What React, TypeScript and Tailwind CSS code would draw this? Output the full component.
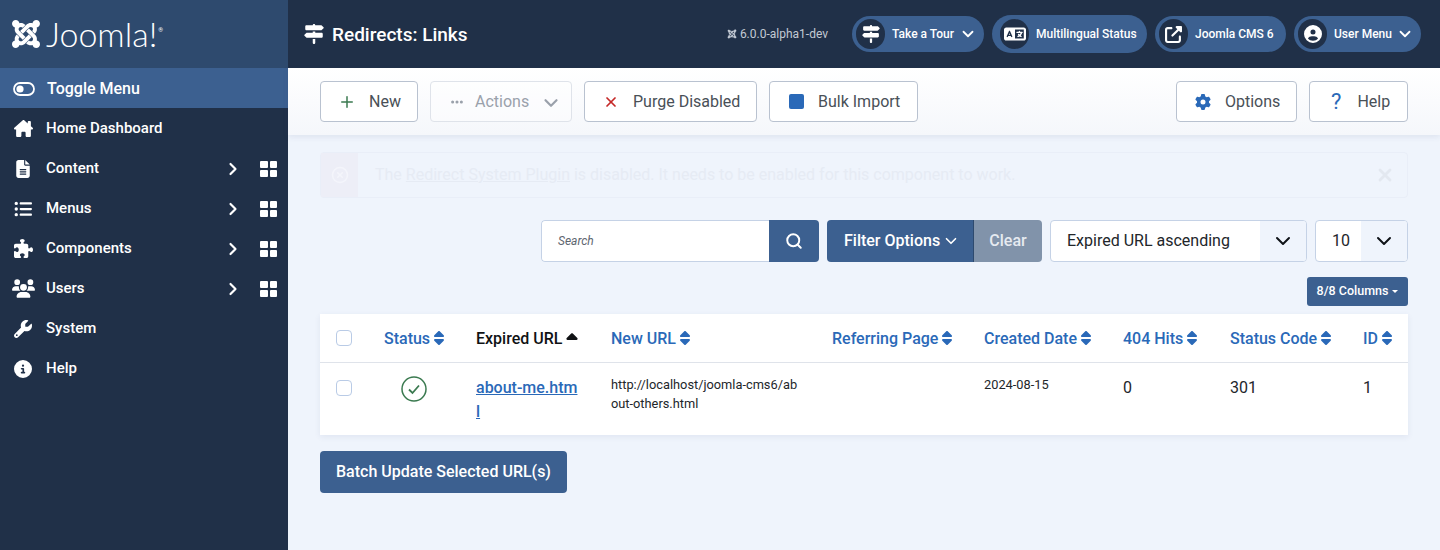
import React from 'react';
import { ChevronDown, ChevronRight, Plus, X, Search, CircleX } from 'lucide-react';
import { FaHouseChimney, FaFileLines, FaListUl, FaPuzzlePiece, FaUsers, FaWrench, FaCircleInfo, FaJoomla, FaSignsPost, FaLanguage, FaUpRightFromSquare, FaCircleUser, FaGear, FaSort, FaSortUp, FaEllipsis } from 'react-icons/fa6';

function ToggleIcon() {
  return (
    <svg width="22" height="14" viewBox="0 0 22 14" fill="none" className="shrink-0">
      <rect x="1" y="1" width="20" height="12" rx="6" stroke="#fff" strokeWidth="1.8" />
      <circle cx="7" cy="7" r="3.6" fill="#fff" />
    </svg>
  );
}

function QuadIcon() {
  return (
    <div className="grid grid-cols-2 gap-[2px] w-[17px] h-[16px]">
      <span className="bg-white rounded-[1px]" />
      <span className="bg-white rounded-[1px]" />
      <span className="bg-white rounded-[1px]" />
      <span className="bg-white rounded-[1px]" />
    </div>
  );
}

const menu = [
  { label: 'Home Dashboard', icon: <FaHouseChimney size={19} /> },
  { label: 'Content', icon: <FaFileLines size={18} />, sub: true },
  { label: 'Menus', icon: <FaListUl size={18} />, sub: true },
  { label: 'Components', icon: <FaPuzzlePiece size={19} />, sub: true },
  { label: 'Users', icon: <FaUsers size={23} />, sub: true },
  { label: 'System', icon: <FaWrench size={18} /> },
  { label: 'Help', icon: <FaCircleInfo size={18} /> },
];

function Sidebar() {
  return (
    <aside className="w-[288px] shrink-0 bg-[#203048] text-white">
      <div className="h-[68px] bg-[#2e4a6e] flex items-center pl-[10px] gap-[4px]">
        <FaJoomla size={32} />
        <span className="text-[34px] font-['Lato'] font-light leading-none">Joomla!</span>
        <span className="text-[6px] self-start mt-[25px] -ml-[3px]">®</span>
      </div>
      <div className="h-10 pt-[1px] bg-[#3c6090] flex items-center pl-[13px] gap-[12px] text-[16px] font-medium">
        <ToggleIcon />
        <span>Toggle Menu</span>
      </div>
      {menu.map((m) => (
        <div key={m.label} className="h-10 pt-[1px] flex items-center text-[15px] font-medium">
          <span className="w-[46px] flex justify-center pl-[1px] pr-[1px] shrink-0">{m.icon}</span>
          <span className="flex-1">{m.label}</span>
          {m.sub && (
            <div className="flex items-center gap-[17px] pr-[11px]">
              <ChevronRight size={20} strokeWidth={2.6} />
              <QuadIcon />
            </div>
          )}
        </div>
      ))}
    </aside>
  );
}

function Pill({ icon, label, chevron, className }: { icon: React.ReactNode; label: string; chevron?: boolean; className: string }) {
  return (
    <div className={`${className} rounded-full bg-[#3c6090] flex items-center text-white text-[12px] font-medium`}>
      <span className="w-[29px] h-[30px] rounded-full bg-[#203048] flex items-center justify-center shrink-0">{icon}</span>
      <span className="ml-[7px] whitespace-nowrap">{label}</span>
      {chevron && <ChevronDown size={18} strokeWidth={2.4} className="ml-auto mr-[7px]" />}
    </div>
  );
}

function Header() {
  return (
    <header className="h-[68px] bg-[#203048] flex items-center text-white">
      <div className="pl-[16px] flex items-center gap-[8px] flex-1">
        <FaSignsPost size={20} />
        <h1 className="text-[19px] font-medium pt-[2px]">Redirects: Links</h1>
      </div>
      <div className="flex items-center gap-[3px] text-[12px] text-[#c3cad4] mr-[24px]">
        <FaJoomla size={10} />
        <span>6.0.0-alpha1-dev</span>
      </div>
      <div className="flex items-center gap-[8px] pr-[19px]">
        <Pill className="w-[132px] h-[36px] pl-[4px]" icon={<FaSignsPost size={18} />} label="Take a Tour" chevron />
        <Pill className="w-[155px] h-[38px] pl-[8px]" icon={<FaLanguage size={22} />} label="Multilingual Status" />
        <Pill className="w-[131px] h-[36px] pl-[4px]" icon={<FaUpRightFromSquare size={17} />} label="Joomla CMS 6" />
        <Pill className="w-[127px] h-[36px] pl-[4px]" icon={<FaCircleUser size={18} />} label="User Menu" chevron />
      </div>
    </header>
  );
}

function ToolButton({ icon, label, className, disabled }: { icon: React.ReactNode; label: string; className: string; disabled?: boolean }) {
  return (
    <button className={`${className} h-[41px] rounded-[4px] border bg-white flex items-center text-[16px] ${disabled ? 'border-[#dfe3ea] bg-white/40 text-[#9aa1ab]' : 'border-[#b9c2d0] text-[#495057]'}`}>
      {icon}
      <span>{label}</span>
    </button>
  );
}

function Toolbar() {
  return (
    <div className="h-[67px] bg-gradient-to-b from-white to-[#f5f7fb] shadow-[0_2px_6px_rgba(50,70,110,0.09)] flex items-center pl-[32px] pr-[32px] relative">
      <div className="flex gap-[12px] flex-1">
        <ToolButton className="w-[98px] pl-[17px] gap-[13px]" label="New" icon={<Plus size={18} strokeWidth={2} className="text-[#3b7a50]" />} />
        <ToolButton disabled className="w-[142px] pl-[19px]" label="Actions" icon={<FaEllipsis size={14} className="mr-[11px] text-[#9aa1ab]" />} />
        <ToolButton className="w-[173px] pl-[18px] gap-[14px]" label="Purge Disabled" icon={<X size={16} strokeWidth={2.6} className="text-[#c52827]" />} />
        <ToolButton className="w-[149px] pl-[19px] gap-[14px]" label="Bulk Import" icon={<span className="w-[15px] h-[15px] rounded-[2px] bg-[#2a69b8]" />} />
      </div>
      <div className="flex gap-[12px]">
        <ToolButton className="w-[121px] pl-[18px] gap-[14px]" label="Options" icon={<FaGear size={16} className="text-[#2a69b8]" />} />
        <ToolButton className="w-[99px] pl-[21px] gap-[16px]" label="Help" icon={<span className="text-[22px] leading-none text-[#2a69b8]">?</span>} />
      </div>
      <ChevronDown size={22} strokeWidth={2.4} className="absolute left-[252px] top-[24px] text-[#9aa1ab]" />
    </div>
  );
}

function Alert() {
  return (
    <div className="h-[46px] flex items-stretch rounded-[4px] border border-[#e9eef8] text-[16px] text-[#e6ebf4]">
      <div className="w-[37px] bg-[#edeef7] flex items-center justify-center">
        <CircleX size={18} className="text-[#f4f5fb]" />
      </div>
      <div className="flex-1 flex items-center pl-[17px]">
        <span>
          The <span className="underline">Redirect System Plugin</span> is disabled. It needs to be enabled for this component to work.
        </span>
      </div>
      <X size={20} strokeWidth={3.4} className="self-center mr-[12px] text-[#e3e8f0]" />
    </div>
  );
}

function SelectBox({ label, className }: { label: string; className: string }) {
  return (
    <div className={`${className} h-[42px] rounded-[4px] border border-[#c5d2e6] bg-white flex overflow-hidden`}>
      <span className="flex-1 flex items-center pl-[16px] text-[16px] text-[#22262a]">{label}</span>
      <span className="w-[46px] bg-[#eff4fc] flex items-center justify-center">
        <ChevronDown size={24} strokeWidth={2} className="text-[#101318]" />
      </span>
    </div>
  );
}

function Filters() {
  return (
    <div className="flex justify-end gap-[8px]">
      <div className="w-[278px] h-[42px] flex rounded-[4px] overflow-hidden">
        <div className="flex-1 border border-r-0 border-[#c5d2e6] bg-white rounded-l-[4px] flex items-center pl-[16px] text-[12px] italic text-[#5e6670]">Search</div>
        <div className="w-[50px] bg-[#3c6090] flex items-center justify-center">
          <Search size={18} strokeWidth={2.6} className="text-white" />
        </div>
      </div>
      <div className="flex h-[42px] rounded-[4px] overflow-hidden text-[16px] font-medium">
        <div className="w-[147px] pl-[17px] bg-[#3c6090] text-white flex items-center gap-[2px] border-r border-[#2e4a6e]">
          Filter Options <ChevronDown size={18} strokeWidth={2.2} />
        </div>
        <div className="w-[68px] bg-[#8193aa] text-[#e6eaf0] flex items-center justify-center">Clear</div>
      </div>
      <SelectBox label="Expired URL ascending" className="w-[257px]" />
      <SelectBox label="10" className="w-[93px]" />
    </div>
  );
}

const columns = [
  { label: 'Status', w: 'w-[92px]' },
  { label: 'Expired URL', w: 'w-[135px]', active: true },
  { label: 'New URL', w: 'w-[221px]' },
  { label: 'Referring Page', w: 'w-[152px]' },
  { label: 'Created Date', w: 'w-[139px]' },
  { label: '404 Hits', w: 'w-[107px]' },
  { label: 'Status Code', w: 'w-[133px]' },
  { label: 'ID', w: 'w-[61px]' },
];

function Check() {
  return <span className="block w-[16px] h-[16px] rounded-[4px] border border-[#b9cbe6] bg-white" />;
}

function LinksTable() {
  return (
    <table className="table-fixed w-full bg-white shadow-[0_2px_6px_rgba(50,70,110,0.08)] text-[16px]">
      <thead>
        <tr className="h-[48px] border-b border-[#dfe3ea]">
          <th className="w-[48px] pl-[16px]"><Check /></th>
          {columns.map((c) => (
            <th key={c.label} className={`${c.w} pl-[16px] pt-[2px] text-left font-medium whitespace-nowrap ${c.active ? 'text-[#101214]' : 'text-[#2a69b8]'}`}>
              {c.label}
              {c.active
                ? <FaSortUp size={18} className="inline ml-[1px] align-[-6px]" />
                : <FaSort size={16} className="inline ml-[1px] align-[-2px]" />}
            </th>
          ))}
        </tr>
      </thead>
      <tbody>
        <tr className="h-[73px] align-top text-[#22262a]">
          <td className="pl-[16px] pt-[17px]"><Check /></td>
          <td className="pt-[13px] pl-[16px]">
            <svg width="26" height="26" viewBox="0 0 26 26" fill="none" stroke="#3b7a50" strokeWidth="1.5" className="ml-[17px]">
              <circle cx="13" cy="13" r="12" />
              <path d="M8 13.5l3.5 3.5 6.5-7.5" strokeWidth="1.8" />
            </svg>
          </td>
          <td className="pl-[16px] pt-[13px] leading-[24px] font-medium">
            <a className="text-[#2a69b8] underline break-all pr-[14px] block">about-me.html</a>
          </td>
          <td className="pl-[16px] pt-[12px] pr-[12px] text-[12.8px] leading-[19px] break-all">http://localhost/joomla-cms6/about-others.html</td>
          <td />
          <td className="pl-[16px] pt-[12px] text-[12.8px] leading-[19px]">2024-08-15</td>
          <td className="pl-[16px] pt-[13px]">0</td>
          <td className="pl-[16px] pt-[13px]">301</td>
          <td className="pl-[16px] pt-[13px]">1</td>
        </tr>
      </tbody>
    </table>
  );
}

export default function App() {
  return (
    <div className="h-[550px] flex overflow-hidden bg-[#eff4fc] font-['Roboto',sans-serif]">
      <Sidebar />
      <div className="flex-1 min-w-0">
        <Header />
        <Toolbar />
        <main className="px-[32px] pt-[17px]">
          <Alert />
          <div className="mt-[22px]"><Filters /></div>
          <div className="flex justify-end mt-[15px] mb-[8px]">
            <button className="w-[101px] h-[29px] bg-[#3c6090] text-white text-[12.5px] font-medium rounded-[3px] flex items-center justify-center gap-[4px]">
              8/8 Columns
              <span className="w-0 h-0 border-x-[3px] border-x-transparent border-t-[3px] border-t-white" />
            </button>
          </div>
          <LinksTable />
          <button className="mt-[16px] w-[247px] h-[42px] bg-[#3c6090] text-white text-[16px] font-medium rounded-[4px]">
            Batch Update Selected URL(s)
          </button>
        </main>
      </div>
    </div>
  );
}
